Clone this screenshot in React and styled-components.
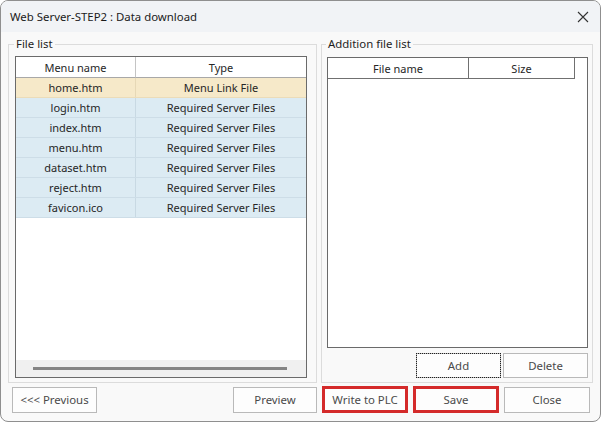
import React from 'react';
import styled, { createGlobalStyle } from 'styled-components';

const GlobalStyle = createGlobalStyle`
  html, body {
    margin: 0;
    padding: 0;
    background: #ffffff;
  }
  body {
    font-family: "Noto Sans", "Open Sans", sans-serif;
    font-size: 11px;
    color: #262626;
  }
  * {
    box-sizing: border-box;
  }
`;

const Window = styled.div`
  width: 601px;
  height: 422px;
  border: 1px solid #8f8f8f;
  border-radius: 8px;
  overflow: hidden;
  background: #f9f9f9;
  display: flex;
  flex-direction: column;
`;

const TitleBar = styled.div`
  height: 31px;
  flex: none;
  display: flex;
  align-items: center;
  justify-content: space-between;
  padding: 0 11px 0 9px;
  background: #f1f3f6;
  font-size: 11.4px;
  color: #1a1a1a;
`;

const CloseGlyph = styled.svg`
  width: 12px;
  height: 12px;
`;

const Body = styled.div`
  flex: 1;
  display: flex;
  flex-direction: column;
  padding: 5px 7px 8px 7px;
`;

const Groups = styled.div`
  flex: 1;
  display: grid;
  grid-template-columns: 309px 272px;
  gap: 4px;
`;

const Group = styled.fieldset`
  margin: 0;
  min-width: 0;
  border: 1px solid #dcdcdc;
  padding: ${(p) => p.$pad};
  display: flex;
  flex-direction: column;
  gap: 5px;
`;

const Legend = styled.legend`
  padding: 0 2px;
  margin-left: -1px;
  font-size: 11.4px;
  line-height: 14px;
  color: #1e1e1e;
`;

const Table = styled.div`
  flex: 1;
  display: flex;
  flex-direction: column;
  border: 1px solid #6a6a6a;
  background: #ffffff;
  min-height: 0;
`;

const HeadRow = styled.div`
  display: grid;
  grid-template-columns: ${(p) => p.$cols};
  height: 21px;
  flex: none;
`;

const HeadCell = styled.div`
  display: flex;
  align-items: center;
  justify-content: center;
  border-bottom: 1px solid ${(p) => (p.$dark ? '#707070' : '#a8a8a8')};
  border-right: 1px solid ${(p) => (p.$dark ? '#707070' : '#c4c4c4')};
  font-size: 11px;
  color: #262626;
  &:last-child {
    border-right: ${(p) => (p.$dark ? '1px solid #707070' : 'none')};
  }
`;

const Row = styled.div`
  display: grid;
  grid-template-columns: 120px 1fr;
  height: 20px;
  flex: none;
  background: ${(p) => (p.$link ? '#f6e9c9' : '#dcebf3')};
  border-bottom: 1px solid ${(p) => (p.$link ? '#ebdcb9' : '#cddde7')};
`;

const Cell = styled.div`
  display: flex;
  align-items: center;
  justify-content: center;
  font-size: 11px;
  color: #262626;
  &:first-child {
    border-right: 1px solid ${(p) => (p.$link ? '#e6d8b6' : '#c8d9e3')};
  }
`;

const Fill = styled.div`
  flex: 1;
`;

const HScroll = styled.div`
  height: 17px;
  flex: none;
  background: #f0f0f0;
  display: flex;
  align-items: center;
  padding: 0 19px 0 17px;
`;

const Thumb = styled.div`
  flex: 1;
  height: 3px;
  background: #858585;
`;

const ButtonRow = styled.div`
  display: flex;
  justify-content: flex-end;
  gap: 2px;
  flex: none;
`;

const Button = styled.button`
  width: ${(p) => p.$w || 85}px;
  height: ${(p) => p.$h || 25}px;
  margin: 0;
  padding: 0;
  font-family: inherit;
  font-size: 11.4px;
  color: #4a4a4a;
  background: #fdfdfd;
  border: ${(p) => (p.$mark ? '3px solid #d42a2a' : '1px solid #b9b9b9')};
  outline: ${(p) => (p.$focus ? '1px dotted #202020' : 'none')};
  outline-offset: -1px;
`;

const Footer = styled.div`
  display: flex;
  align-items: center;
  gap: 5px;
  flex: none;
  padding: 3px 3px 0 4px;
`;

const Spacer = styled.div`
  flex: 1;
`;

const files = [
  { name: 'home.htm', type: 'Menu Link File', link: true },
  { name: 'login.htm', type: 'Required Server Files' },
  { name: 'index.htm', type: 'Required Server Files' },
  { name: 'menu.htm', type: 'Required Server Files' },
  { name: 'dataset.htm', type: 'Required Server Files' },
  { name: 'reject.htm', type: 'Required Server Files' },
  { name: 'favicon.ico', type: 'Required Server Files' },
];

export default function App() {
  return (
    <>
      <GlobalStyle />
      <Window>
        <TitleBar>
          <span>Web Server-STEP2 : Data download</span>
          <CloseGlyph viewBox="0 0 12 12">
            <path d="M1 1 L11 11 M11 1 L1 11" stroke="#333" strokeWidth="1.1" fill="none" />
          </CloseGlyph>
        </TitleBar>
        <Body>
          <Groups>
            <Group $pad="5px 9px 4px 6px">
              <Legend>File list</Legend>
              <Table>
                <HeadRow $cols="120px 1fr">
                  <HeadCell>Menu name</HeadCell>
                  <HeadCell>Type</HeadCell>
                </HeadRow>
                {files.map((f) => (
                  <Row key={f.name} $link={f.link}>
                    <Cell $link={f.link}>{f.name}</Cell>
                    <Cell>{f.type}</Cell>
                  </Row>
                ))}
                <Fill />
                <HScroll>
                  <Thumb />
                </HScroll>
              </Table>
            </Group>
            <Group $pad="6px 4px 4px 5px">
              <Legend>Addition file list</Legend>
              <Table>
                <HeadRow $cols="141px 106px 1fr">
                  <HeadCell $dark>File name</HeadCell>
                  <HeadCell $dark>Size</HeadCell>
                  <div />
                </HeadRow>
                <Fill />
              </Table>
              <ButtonRow>
                <Button $focus>Add</Button>
                <Button>Delete</Button>
              </ButtonRow>
            </Group>
          </Groups>
          <Footer>
            <Button $h={26}>&lt;&lt;&lt; Previous</Button>
            <Spacer />
            <Button $w={84} $h={26}>Preview</Button>
            <Button $w={86} $mark $h={27}>Write to PLC</Button>
            <Button $w={86} $mark $h={27}>Save</Button>
            <Button $w={86} $h={26}>Close</Button>
          </Footer>
        </Body>
      </Window>
    </>
  );
}
